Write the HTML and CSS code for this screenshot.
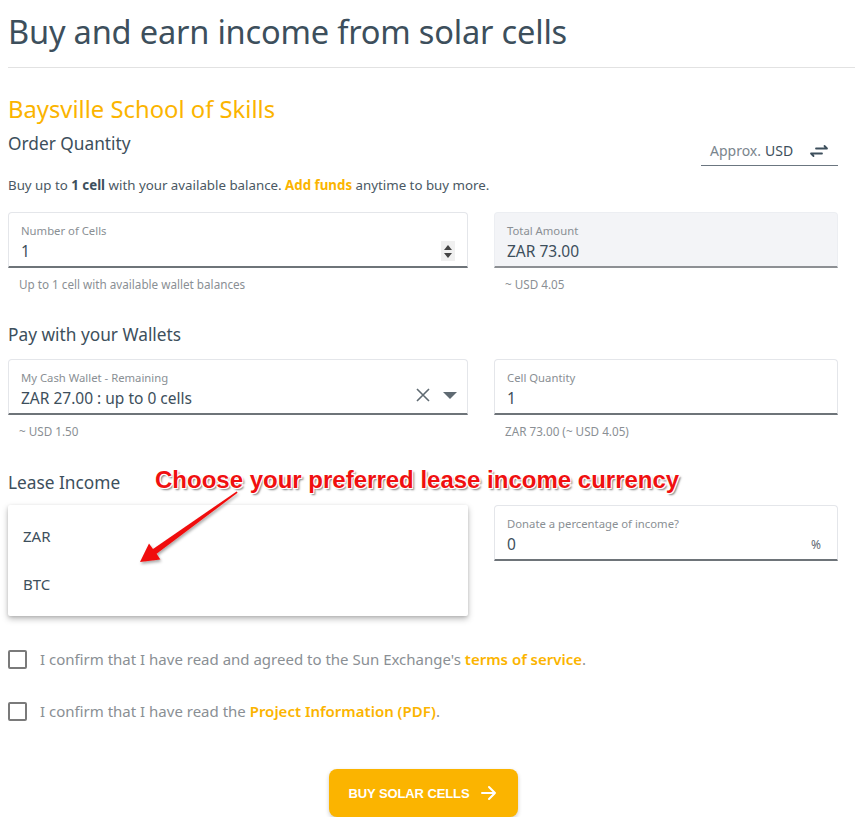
FILE: index.html
```html
<!DOCTYPE html>
<html>
<head>
<meta charset="utf-8">
<link rel="stylesheet" href="styles.css">
</head>
<body>
<div class="page">
  <h1 class="title">Buy and earn income from solar cells</h1>
  <div class="rule"></div>

  <h2 class="project">Baysville School of Skills</h2>
  <div class="order-head">
    <h3 class="section">Order Quantity</h3>
    <div class="toggle">
      <span>Approx.</span> <span class="dark">USD</span>
      <svg class="swap" width="20" height="14" viewBox="0 0 20 14"><path d="M7 4.5h11M15.5 2l2.5 2.5M13 9.5H2M4.5 12L2 9.5" fill="none" stroke="#3d4f5c" stroke-width="1.8" stroke-linecap="round" stroke-linejoin="round"/></svg>
    </div>
  </div>
  <p class="intro">Buy up to <b>1 cell</b> with your available balance. <a class="link">Add funds</a> anytime to buy more.</p>

  <div class="grid first">
    <div class="col">
      <div class="field">
        <div class="label">Number of Cells</div>
        <div class="value">1</div>
        <div class="spinner"><span class="up"></span><span class="down"></span></div>
      </div>
      <div class="helper">Up to 1 cell with available wallet balances</div>
    </div>
    <div class="col">
      <div class="field disabled">
        <div class="label">Total Amount</div>
        <div class="value">ZAR 73.00</div>
      </div>
      <div class="helper">~ USD 4.05</div>
    </div>
  </div>

  <h3 class="section pay">Pay with your Wallets</h3>
  <div class="grid wallets">
    <div class="col">
      <div class="field">
        <div class="label">My Cash Wallet - Remaining</div>
        <div class="value">ZAR 27.00 : up to 0 cells</div>
        <div class="select-icons">
          <svg width="16" height="16" viewBox="0 0 16 16"><path d="M2 2l12 12M14 2L2 14" stroke="#5f6a72" stroke-width="1.6" fill="none"/></svg>
          <span class="caret"></span>
        </div>
      </div>
      <div class="helper">~ USD 1.50</div>
    </div>
    <div class="col">
      <div class="field">
        <div class="label">Cell Quantity</div>
        <div class="value">1</div>
      </div>
      <div class="helper">ZAR 73.00 (~ USD 4.05)</div>
    </div>
  </div>

  <div class="lease">
    <h3 class="section">Lease Income</h3>
    <div class="annotation">Choose your preferred lease income currency</div>
    <svg class="arrow" width="120" height="90" viewBox="0 0 120 90">
      <defs><filter id="sh" x="-20%" y="-20%" width="140%" height="140%"><feDropShadow dx="1" dy="2" stdDeviation="1.5" flood-opacity="0.35"/></filter></defs>
      <polygon filter="url(#sh)" fill="#f01010" points="108.6,5.4 109.6,6.8 28.6,67.8 32.4,73.4 12,76 21,57.6 25,63"/>
    </svg>
  </div>

  <div class="grid lease-grid">
    <div class="col">
      <div class="menu">
        <div class="item">ZAR</div>
        <div class="item">BTC</div>
      </div>
    </div>
    <div class="col">
      <div class="field">
        <div class="label">Donate a percentage of income?</div>
        <div class="value">0</div>
        <div class="suffix">%</div>
      </div>
    </div>
  </div>

  <label class="check"><span class="box"></span>I confirm that I have read and agreed to the Sun Exchange's <a class="link">terms of service</a>.</label>
  <label class="check"><span class="box"></span>I confirm that I have read the <a class="link">Project Information (PDF)</a>.</label>

  <div class="actions">
    <button class="buy">BUY SOLAR CELLS
      <svg width="18" height="18" viewBox="0 0 18 18"><path d="M2 9h13M9 3l6 6-6 6" fill="none" stroke="#fff" stroke-width="2" stroke-linecap="round" stroke-linejoin="round"/></svg>
    </button>
  </div>
</div>
</body>
</html>
```

FILE: styles.css
```css
* { box-sizing: border-box; }
body {
  margin: 0;
  background: #fff;
  font-family: "Noto Sans", "Open Sans", sans-serif;
  color: #3d4f5c;
  overflow: hidden;
}
.page {
  padding: 0 17px 0 8px;
  width: 855px;
}
.title {
  margin: 0;
  padding-top: 11px;
  font-size: 32.6px;
  font-weight: 400;
  line-height: 42px;
  color: #3d4f5c;
  letter-spacing: -0.2px;
}
.rule {
  height: 1px;
  background: #e2e2e2;
  margin: 14px -17px 0 0;
}
.project {
  margin: 26px 0 0;
  font-size: 23.8px;
  line-height: 30px;
  font-weight: 400;
  color: #fbb400;
}
.order-head {
  display: flex;
  justify-content: space-between;
  align-items: flex-start;
  margin-top: 6px;
}
.section {
  margin: 0;
  font-size: 17.3px;
  line-height: 24px;
  font-weight: 400;
  color: #3d4f5c;
}
.order-head .section { margin-top: 2px; }
.toggle {
  margin-top: 6px;
  width: 137px;
  height: 30px;
  border-bottom: 1px solid #6b7680;
  display: flex;
  align-items: center;
  padding-left: 9px;
  font-size: 14px;
  color: #7a858d;
  gap: 4px;
}
.toggle .dark { color: #3d4f5c; }
.swap { margin-left: 12px; }
.intro {
  margin: 10px 0 0;
  font-size: 13.3px;
  line-height: 18px;
  color: #4a5863;
}
.intro b { font-weight: 700; color: #3d4f5c; }
.link { color: #fbb400; font-weight: 600; }
.intro .link { font-weight: 700; }
.grid {
  display: grid;
  grid-template-columns: 460px 344px;
  column-gap: 26px;
}
.grid.first { margin-top: 18px; }
.field {
  position: relative;
  height: 56px;
  border: 1px solid #e4e6ea;
  border-bottom: 2px solid #6e7479;
  border-radius: 4px 4px 0 0;
  padding: 11px 12px 0;
  background: #fff;
}
.field.disabled {
  background: #f3f4f7;
  border-color: #eceef2;
  border-bottom-color: #8d9094;
}
.label {
  font-size: 11.3px;
  line-height: 14px;
  color: #8a8f94;
}
.value {
  font-size: 15.5px;
  line-height: 22px;
  margin-top: 2px;
  color: #3d4f5c;
}
.helper {
  font-size: 11.7px;
  line-height: 14px;
  color: #8a8f94;
  margin: 9px 0 0 11px;
}
.spinner {
  position: absolute;
  right: 12px;
  top: 28px;
  width: 14px;
  height: 20px;
  background: #f0f0f0;
  display: flex;
  flex-direction: column;
  align-items: center;
  justify-content: center;
  gap: 3px;
}
.spinner .up {
  width: 0; height: 0;
  border-left: 4px solid transparent;
  border-right: 4px solid transparent;
  border-bottom: 5px solid #444;
}
.spinner .down {
  width: 0; height: 0;
  border-left: 4px solid transparent;
  border-right: 4px solid transparent;
  border-top: 5px solid #444;
}
.select-icons {
  position: absolute;
  right: 10px;
  top: 27px;
  display: flex;
  align-items: center;
  gap: 12px;
}
.caret {
  width: 0; height: 0;
  border-left: 7px solid transparent;
  border-right: 7px solid transparent;
  border-top: 7px solid #5f6a72;
}
.pay { margin-top: 32px; }
.grid.wallets { margin-top: 12px; }
.lease {
  position: relative;
  margin-top: 33px;
  height: 24px;
}
.annotation {
  position: absolute;
  left: 147px;
  top: -6px;
  font-family: "Liberation Sans", Arial, sans-serif;
  font-weight: 700;
  font-size: 24px;
  line-height: 30px;
  color: #f01010;
  white-space: nowrap;
  text-shadow: -1px -1px 0 #fff, 1px -1px 0 #fff, -1px 1px 0 #fff, 1px 1px 0 #fff, 2px 2px 2px rgba(0,0,0,0.5);
}
.arrow {
  position: absolute;
  left: 120px;
  top: 15px;
  z-index: 3;
}
.lease-grid { margin-top: 10px; }
.menu {
  background: #fff;
  height: 111px;
  box-shadow: 0 3px 6px rgba(0,0,0,0.25), 0 1px 3px rgba(0,0,0,0.12);
  border-radius: 2px;
  padding-top: 7px;
}
.item {
  height: 48px;
  line-height: 48px;
  padding-left: 15px;
  font-size: 15px;
  color: #3d4f5c;
}
.suffix {
  position: absolute;
  right: 16px;
  top: 30px;
  font-size: 12px;
  color: #5f6a72;
}
.check {
  display: flex;
  align-items: center;
  font-size: 15px;
  color: #8a8f94;
  height: 20px;
  white-space: pre;
}
.lease-grid + .check { margin-top: 33px; }
.check + .check { margin-top: 32px; }
.check .link { font-weight: 600; }
.box {
  width: 19px;
  height: 19px;
  border: 2px solid #7a7a7a;
  border-radius: 2px;
  margin-right: 13px;
  flex: none;
}
.actions {
  display: flex;
  justify-content: center;
  margin-top: 48px;
}
.buy {
  width: 189px;
  height: 48px;
  border: none;
  border-radius: 8px;
  background: #fbb400;
  color: #fff;
  font-family: "Liberation Sans", Arial, sans-serif;
  font-weight: 700;
  font-size: 13px;
  letter-spacing: -0.1px;
  display: flex;
  align-items: center;
  justify-content: center;
  gap: 10px;
  box-shadow: 0 2px 4px rgba(0,0,0,0.2);
}
```
